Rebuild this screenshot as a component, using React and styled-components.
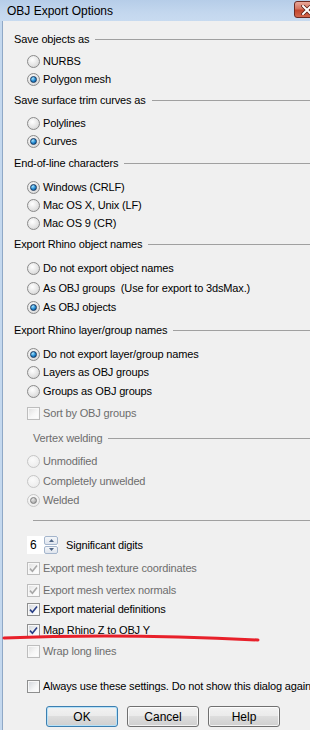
import React from "react";
import styled, { createGlobalStyle } from "styled-components";

const GlobalStyle = createGlobalStyle`
  html, body {
    margin: 0;
    padding: 0;
    background: #f0f0f0;
  }
  body {
    font-family: "Liberation Sans", Arial, sans-serif;
    font-size: 11px;
    letter-spacing: -0.15px;
    color: #000;
  }
`;

const Window = styled.div`
  position: relative;
  width: 310px;
  height: 730px;
  overflow: hidden;
  display: flex;
  flex-direction: column;
  background: #f0f0f0;
`;

const TitleBar = styled.div`
  height: 21px;
  flex-shrink: 0;
  display: flex;
  align-items: center;
  justify-content: space-between;
  padding-left: 7px;
  background: linear-gradient(#b6cde8, #c3d7ee 60%, #c8dbf0);
  font-size: 12px;
  letter-spacing: 0;
`;

const CloseButton = styled.div`
  width: 26px;
  height: 17px;
  margin-right: -10px;
  margin-top: -2px;
  box-sizing: border-box;
  border: 1px solid #6d2a22;
  border-radius: 3px;
  background: linear-gradient(#e9a89a, #d4735f 45%, #c2452c 55%, #d2674d);
  display: flex;
  align-items: center;
  padding-left: 6px;
`;

const Body = styled.div`
  flex: 1;
  display: flex;
  flex-direction: column;
  border-left: 2px solid #c4d8ee;
  box-shadow: inset 1px 0 0 #8fa8c6;
  padding-left: 12px;
`;

const Heading = styled.div`
  display: flex;
  align-items: center;
  height: 18px;
  margin-top: ${(p) => p.$gap || 0}px;
  margin-left: ${(p) => p.$indent || 0}px;
  color: ${(p) => (p.$disabled ? "#6d6d6d" : "#000")};
  white-space: nowrap;

  &::after {
    content: "";
    flex: 1;
    height: 1px;
    margin-left: 6px;
    background: #a0a0a0;
  }
`;

const Option = styled.div`
  display: flex;
  align-items: center;
  gap: 3px;
  height: 18px;
  margin-top: ${(p) => p.$gap || 0}px;
  padding-left: 13px;
  color: ${(p) => (p.$disabled ? "#6d6d6d" : "#000")};
  white-space: nowrap;
`;

const RadioDot = styled.span`
  width: 13px;
  height: 13px;
  flex-shrink: 0;
  box-sizing: border-box;
  border-radius: 50%;
  border: 1px solid ${(p) => (p.$disabled ? "#c6c6c6" : "#8a8a8a")};
  background: ${(p) =>
    p.$disabled
      ? "radial-gradient(circle at 40% 35%, #fbfbfb, #ececec 80%)"
      : "radial-gradient(circle at 40% 35%, #ffffff, #e2e2e2 60%, #c9c9c9)"};
  display: flex;
  align-items: center;
  justify-content: center;

  &::after {
    content: "";
    display: ${(p) => (p.$checked ? "block" : "none")};
    width: 5px;
    height: 5px;
    border-radius: 50%;
    border: 1px solid ${(p) => (p.$disabled ? "#7d7d7d" : "#16375e")};
    background: ${(p) =>
      p.$disabled
        ? "radial-gradient(circle at 35% 30%, #e6e6e6, #9a9a9a)"
        : "radial-gradient(circle at 35% 30%, #a8e4ff, #1d86cf 55%, #0c4a86)"};
  }
`;

const CheckFrame = styled.span`
  width: 13px;
  height: 13px;
  flex-shrink: 0;
  box-sizing: border-box;
  border: 1px solid ${(p) => (p.$disabled ? "#bdbdbd" : "#8e8f8f")};
  background: ${(p) =>
    p.$disabled
      ? "linear-gradient(135deg, #dedede, #f7f7f7 55%, #ffffff)"
      : "linear-gradient(135deg, #d0d4da, #f4f5f6 60%, #ffffff)"};
  box-shadow: inset 0 0 0 1px #f8f8f8;
  display: flex;
  align-items: center;
  justify-content: center;
`;

const Separator = styled.div`
  height: 1px;
  margin-top: ${(p) => p.$gap || 0}px;
  margin-left: 19px;
  background: #a0a0a0;
`;

const SpinRow = styled.div`
  display: flex;
  align-items: center;
  height: 18px;
  margin-top: ${(p) => p.$gap || 0}px;
  padding-left: 13px;
`;

const SpinInput = styled.div`
  width: 17px;
  height: 18px;
  box-sizing: border-box;
  background: #fff;
  padding-left: 3px;
  display: flex;
  align-items: center;
  font-size: 12px;
`;

const Spinner = styled.div`
  width: 14px;
  height: 18px;
  display: flex;
  flex-direction: column;
  gap: 1px;
  background: #fff;
`;

const SpinHalf = styled.div`
  flex: 1;
  box-sizing: border-box;
  border: 1px solid #a4b5cc;
  border-radius: 2px;
  background: linear-gradient(#f4f6f9, #dfe5ee);
  display: flex;
  align-items: center;
  justify-content: center;
`;

const SpinLabel = styled.span`
  margin-left: 8px;
`;

const ButtonRow = styled.div`
  display: flex;
  gap: 9px;
  margin-top: ${(p) => p.$gap || 0}px;
  padding-left: 32px;
`;

const Button = styled.button`
  width: 72px;
  height: 21px;
  box-sizing: border-box;
  padding: 0;
  border: 1px solid ${(p) => (p.$primary ? "#3c7fb1" : "#707070")};
  border-radius: 3px;
  background: linear-gradient(#f2f2f2 0%, #ebebeb 45%, #dddddd 50%, #cfcfcf 100%);
  box-shadow: inset 0 0 0 1px ${(p) => (p.$primary ? "#b8e2f8" : "rgba(255,255,255,0.75)")};
  font-family: "Liberation Sans", Arial, sans-serif;
  font-size: 12px;
  color: #000;
`;

const Annotation = styled.svg`
  position: absolute;
  left: 0;
  top: 0;
  pointer-events: none;
`;

const Radio = ({ label, checked, disabled, gap }) => (
  <Option $gap={gap} $disabled={disabled}>
    <RadioDot $checked={checked} $disabled={disabled} />
    {label}
  </Option>
);

const Check = ({ label, checked, disabled, gap }) => (
  <Option $gap={gap} $disabled={disabled}>
    <CheckFrame $disabled={disabled}>
      {checked && (
        <svg width="9" height="9" viewBox="0 0 9 9">
          <path
            d="M1 4.6 L3.4 7.2 L8 1.4"
            fill="none"
            stroke={disabled ? "#a8a8a8" : "#2a3f86"}
            strokeWidth="1.6"
          />
        </svg>
      )}
    </CheckFrame>
    {label}
  </Option>
);

const Arrow = ({ up }) => (
  <svg width="5" height="3" viewBox="0 0 5 3">
    <path d={up ? "M0 3 L2.5 0 L5 3 Z" : "M0 0 L2.5 3 L5 0 Z"} fill="#4e6585" />
  </svg>
);

export default function App() {
  return (
    <>
      <GlobalStyle />
      <Window>
        <TitleBar>
          <span>OBJ Export Options</span>
          <CloseButton>
            <svg width="12" height="10" viewBox="0 0 12 10">
              <path d="M2 1 L10 9 M10 1 L2 9" stroke="#5a2018" strokeWidth="3.6" strokeLinecap="square" />
              <path d="M2 1 L10 9 M10 1 L2 9" stroke="#fff" strokeWidth="2" strokeLinecap="square" />
            </svg>
          </CloseButton>
        </TitleBar>
        <Body>
          <Heading $gap={9}>Save objects as</Heading>
          <Radio gap={4} label="NURBS" />
          <Radio label="Polygon mesh" checked />

          <Heading $gap={3}>Save surface trim curves as</Heading>
          <Radio gap={5} label="Polylines" />
          <Radio label="Curves" checked />

          <Heading $gap={4}>End-of-line characters</Heading>
          <Radio gap={6} label="Windows (CRLF)" checked />
          <Radio label="Mac OS X, Unix (LF)" />
          <Radio label="Mac OS 9 (CR)" />

          <Heading $gap={3}>Export Rhino object names</Heading>
          <Radio gap={6} label="Do not export object names" />
          <Radio gap={2} label={"As OBJ groups\u00a0\u00a0(Use for export to 3dsMax.)"} />
          <Radio gap={1} label="As OBJ objects" checked />

          <Heading $gap={5}>Export Rhino layer/group names</Heading>
          <Radio gap={6} label="Do not export layer/group names" checked />
          <Radio label="Layers as OBJ groups" />
          <Radio gap={1} label="Groups as OBJ groups" />
          <Check gap={4} label="Sort by OBJ groups" disabled />

          <Heading $gap={7} $indent={19} $disabled>Vertex welding</Heading>
          <Radio gap={5} label="Unmodified" disabled />
          <Radio gap={2} label="Completely unwelded" disabled />
          <Radio gap={1} label="Welded" checked disabled />

          <Separator $gap={11} />

          <SpinRow $gap={15}>
            <SpinInput>6</SpinInput>
            <Spinner>
              <SpinHalf>
                <Arrow up />
              </SpinHalf>
              <SpinHalf>
                <Arrow />
              </SpinHalf>
            </Spinner>
            <SpinLabel>Significant digits</SpinLabel>
          </SpinRow>

          <Check gap={5} label="Export mesh texture coordinates" checked disabled />
          <Check gap={4} label="Export mesh vertex normals" checked disabled />
          <Check gap={1} label="Export material definitions" checked />
          <Check gap={3} label="Map Rhino Z to OBJ Y" checked />
          <Check gap={3} label="Wrap long lines" disabled />

          <Check gap={17} label="Always use these settings. Do not show this dialog again" />

          <ButtonRow $gap={11}>
            <Button $primary>OK</Button>
            <Button>Cancel</Button>
            <Button>Help</Button>
          </ButtonRow>
        </Body>
        <Annotation width="310" height="730">
          <path
            d="M4 638 Q 120 633 258 640"
            fill="none"
            stroke="#e8202a"
            strokeWidth="3"
            strokeLinecap="round"
          />
        </Annotation>
      </Window>
    </>
  );
}
